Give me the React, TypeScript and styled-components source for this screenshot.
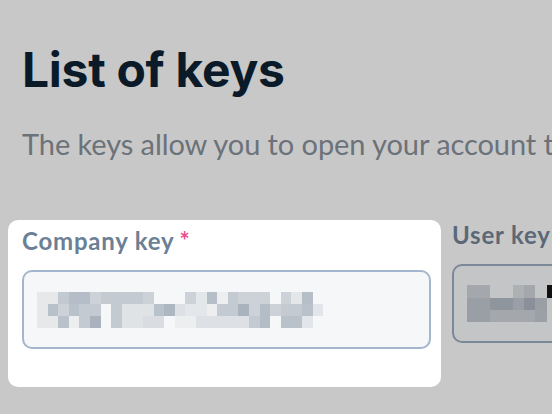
import React from "react";
import styled, { createGlobalStyle } from "styled-components";

const Global = createGlobalStyle`
  html, body { margin: 0; padding: 0; background: #c8c8c8; }
  body { font-family: "Lato", "Liberation Sans", sans-serif; overflow: hidden; }
`;

const Page = styled.main`
  width: 552px;
  height: 414px;
  overflow: hidden;
  padding: 40px 0 0 22px;
  box-sizing: border-box;
`;

const Title = styled.h1`
  margin: 0;
  font-family: "Inter", "Liberation Sans", sans-serif;
  font-weight: 700;
  font-size: 48px;
  line-height: 60px;
  letter-spacing: -0.3px;
  color: #0b1a28;
`;

const Lead = styled.p`
  margin: 26px 0 0;
  font-size: 29px;
  line-height: 35px;
  letter-spacing: -0.08px;
  color: #6b7279;
  white-space: nowrap;
`;

const Fields = styled.div`
  display: flex;
  gap: 11px;
  margin-top: 59px;
`;

const Spot = styled.div`
  background: #ffffff;
  border-radius: 10px;
  margin: 0 0 0 -14px;
  padding: 6px 10px 38px 14px;
  flex: none;
`;

const Field = styled.div<{ $width: number }>`
  width: ${(p) => p.$width}px;
  flex: none;
  display: flex;
  flex-direction: column;
  gap: 15px;
`;

const Label = styled.label<{ $dim?: boolean }>`
  font-weight: 700;
  font-size: 24px;
  line-height: 29px;
  letter-spacing: 0.8px;
  color: ${(p) => (p.$dim ? "#5b6877" : "#6b7f95")};
`;

const Star = styled.span`
  color: #ec4d8e;
  margin-left: 5px;
`;

const Input = styled.div<{ $dim?: boolean }>`
  height: 79px;
  box-sizing: border-box;
  border: 2px solid ${(p) => (p.$dim ? "#7b8898" : "#a3b6cd")};
  border-radius: 10px;
  background: ${(p) => (p.$dim ? "#c4c5c6" : "#f5f7f9")};
  display: flex;
  align-items: center;
  padding-left: 13px;
  overflow: hidden;
`;

const company = [
  "e6e8ea e6e8ea c3c9d0 b5bec8 b5bec8 ccd2d8 c4cad1 c4cad1 c4cad1 c4cad1 ccd2d8 f5f7f9 f5f7f9 f5f7f9 ccd2d8 e4e7ea b6bfc8 eceef0 c4cad1 ccd2d8 ccd2d8 ccd2d8 f5f7f9 ccd2d8 e4e7ea b6bfc8 f5f7f9",
  "e6e8ea b8c1ca ccd2d8 b9c1ca c4cad1 c4cad1 f5f7f9 c4cad1 e0e3e6 e0e3e6 e0e3e6 b9c1ca adb7c2 dde1e5 e4e7ea e4e7ea eceef0 c4cad1 c4cad1 a9b2bd ccd2d8 b4bdc6 ccd2d8 c4cad1 c4cad1 b9c1ca e2e5e9",
  "e6e8ea e6e8ea b9c1ca eceef0 c4cad1 a9b2bd f5f7f9 c4cad1 e0e3e6 e0e3e6 d9dde1 d9dde1 f5f7f9 eceef0 eceef0 dde1e5 dde1e5 dde1e5 dde1e5 dde1e5 c4cad1 b4bdc6 f5f7f9 b9c1ca b9c1ca e2e5e9 f5f7f9",
];

const user = [
  "a4a7ab a4a7ab c4c5c6 c4c5c6 aeb1b4 a4a7ab c4c5c6 111111 c4c5c6",
  "9a9fa5 9a9fa5 8e959d 8e959d 9a9fa5 8a9099 9a9fa5 c4c5c6 c4c5c6",
  "9a9fa5 9a9fa5 a4a7ab a4a7ab a4a7ab a4a7ab 9aa0a6 c4c5c6 c4c5c6",
];

const Mosaic: React.FC<{ rows: string[]; cw: number; ch: number }> = ({ rows, cw, ch }) => {
  const cols = rows[0].split(" ").length;
  return (
    <svg width={cols * cw} height={rows.length * ch} shapeRendering="crispEdges">
      {rows.map((r, y) =>
        r.split(" ").map((c, x) => (
          <rect key={`${x}-${y}`} x={x * cw} y={y * ch} width={cw + 0.5} height={ch + 0.5} fill={`#${c}`} />
        ))
      )}
    </svg>
  );
};

export default function App() {
  return (
    <>
      <Global />
      <Page>
        <Title>List of keys</Title>
        <Lead>The keys allow you to open your account to other services</Lead>
        <Fields>
          <Spot>
            <Field $width={409}>
              <Label>
                Company key<Star>*</Star>
              </Label>
              <Input>
                <Mosaic rows={company} cw={10.6} ch={12} />
              </Input>
            </Field>
          </Spot>
          <Field $width={409}>
            <Label $dim>User key</Label>
            <Input $dim>
              <Mosaic rows={user} cw={11.4} ch={12.5} />
            </Input>
          </Field>
        </Fields>
      </Page>
    </>
  );
}
